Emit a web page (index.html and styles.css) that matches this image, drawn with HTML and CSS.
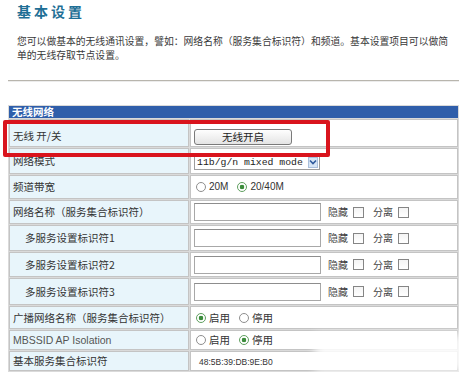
FILE: index.html
```html
<!DOCTYPE html>
<html lang="zh-CN">
<head>
<meta charset="utf-8">
<title>基本设置</title>
<link rel="stylesheet" href="styles.css">
</head>
<body>
<div class="page">
  <h1 class="title">基本设置</h1>
  <p class="desc">您可以做基本的无线通讯设置，譬如：网络名称（服务集合标识符）和频道。基本设置项目可以做简<br>单的无线存取节点设置。</p>
  <div class="rule"></div>
  <div class="table-wrap">
    <table class="settings">
      <colgroup><col class="c1"><col class="c2"></colgroup>
      <tr class="head"><td colspan="2">无线网络</td></tr>
      <tr class="r28 first">
        <td class="lab">无线 开/关</td>
        <td class="val"><button class="btn">无线开启</button></td>
      </tr>
      <tr class="r26">
        <td class="lab">网络模式</td>
        <td class="val">
          <div class="select"><span class="txt">11b/g/n mixed mode</span><span class="arrow"><svg width="8" height="6" viewBox="0 0 8 6"><path d="M1 1.5 L4 4.5 L7 1.5" fill="none" stroke="#2f5a9c" stroke-width="1.6"/></svg></span></div>
        </td>
      </tr>
      <tr class="r24">
        <td class="lab">频道带宽</td>
        <td class="val"><div class="line opts"><span class="radio"></span><span class="en">20M</span><span class="radio on gap"></span><span class="en">20/40M</span></div></td>
      </tr>
      <tr class="r24">
        <td class="lab">网络名称（服务集合标识符）</td>
        <td class="val"><div class="line"><span class="field"></span><span class="cap">隐藏</span><span class="check"></span><span class="cap cap2">分离</span><span class="check"></span></div></td>
      </tr>
      <tr class="r26">
        <td class="lab sub">多服务设置标识符1</td>
        <td class="val"><div class="line"><span class="field"></span><span class="cap">隐藏</span><span class="check"></span><span class="cap cap2">分离</span><span class="check"></span></div></td>
      </tr>
      <tr class="r25">
        <td class="lab sub">多服务设置标识符2</td>
        <td class="val"><div class="line"><span class="field"></span><span class="cap">隐藏</span><span class="check"></span><span class="cap cap2">分离</span><span class="check"></span></div></td>
      </tr>
      <tr class="r27">
        <td class="lab sub">多服务设置标识符3</td>
        <td class="val"><div class="line"><span class="field"></span><span class="cap">隐藏</span><span class="check"></span><span class="cap cap2">分离</span><span class="check"></span></div></td>
      </tr>
      <tr class="r23">
        <td class="lab">广播网络名称（服务集合标识符）</td>
        <td class="val"><div class="line opts"><span class="radio on"></span><span>启用</span><span class="radio gap"></span><span>停用</span></div></td>
      </tr>
      <tr class="r20">
        <td class="lab en light">MBSSID AP Isolation</td>
        <td class="val"><div class="line opts"><span class="radio"></span><span>启用</span><span class="radio on gap"></span><span>停用</span></div></td>
      </tr>
      <tr class="r20">
        <td class="lab">基本服务集合标识符</td>
        <td class="val"><span class="mac">48:5B:39:DB:9E:B0</span></td>
      </tr>
    </table>
    <div class="highlight"></div>
    <div class="smudge"></div>
  </div>
</div>
</body>
</html>
```

FILE: styles.css
```css
* { box-sizing: border-box; }
html, body { margin: 0; padding: 0; background: #fff; }
body {
  font-family: "Noto Sans CJK SC", "Liberation Sans", sans-serif;
  color: #333;
  overflow: hidden;
}
.page { padding: 1px 0 0 8px; width: 468px; }

.title {
  margin: 0 0 0 9px;
  font-size: 14px;
  line-height: 20px;
  font-weight: bold;
  letter-spacing: 3px;
  color: #1f6f96;
}
.desc {
  margin: 13px 0 0 9px;
  font-size: 9.8px;
  line-height: 14px;
  color: #3a3a3a;
  white-space: nowrap;
}
.rule {
  margin-top: 18px;
  width: 451px;
  height: 2px;
  border-top: 1px solid #b8b5ad;
  border-bottom: 1px solid #ececec;
}

.table-wrap { position: relative; margin-top: 23px; width: 451px; }
.settings {
  border-collapse: separate;
  border-spacing: 1px;
  width: 451px;
  table-layout: fixed;
  background: #dadada;
}
.c1 { width: 180px; }
.settings td {
  border: 1px solid #c4c4c4;
  padding: 0 0 0 3px;
  vertical-align: middle;
  font-size: 10.5px;
  line-height: 12px;
  white-space: nowrap;
}
.head td {
  height: 12px;
  background: #2f5eaa;
  border-color: #2f5eaa;
  color: #fff;
  font-weight: bold;
  line-height: 10px;
  padding-left: 2px;
}
.r28 td { height: 28px; }
.r27 td { height: 27px; }
.r26 td { height: 26px; }
.r25 td { height: 25px; }
.r24 td { height: 24px; }
.r23 td { height: 23px; }
.r20 td { height: 20px; }
.first td { padding-top: 6px; }

.lab { background: #e8f5fb; color: #333; }
.lab.sub { padding-left: 15px; }
.lab.light { color: #555; }
.val { background: #fff; color: #333; }
.en { font-family: "Liberation Sans", Arial, sans-serif; font-size: 10px; }

.btn {
  display: block;
  width: 98px;
  height: 16px;
  margin-top: 1px;
  padding: 0;
  border: 1px solid #7a7a7a;
  border-radius: 3px;
  background: linear-gradient(#fefefe, #e4e4e4);
  font: 10.5px/14px "Noto Sans CJK SC", sans-serif;
  color: #222;
}

.select {
  display: flex;
  align-items: center;
  width: 126px;
  height: 15px;
  margin-top: 2px;
  padding-left: 2px;
  border: 1px solid #9c9c9c;
  background: #fff;
  font: 9.8px/13px "Liberation Mono", "Courier New", monospace;
  color: #222;
}
.select .txt { flex: 1; }
.select .arrow {
  display: flex;
  align-items: center;
  justify-content: center;
  width: 10px;
  height: 11px;
  margin-right: 1px;
  background: #d7e5f5;
  border: 1px solid #a9bfdc;
}

.line { display: flex; align-items: center; }
.opts { margin-left: 2px; gap: 3px; }
.radio {
  width: 10px;
  height: 10px;
  border-radius: 50%;
  border: 1px solid #8e8e8e;
  background: #fff;
}
.radio.on {
  border-color: #5f9f5f;
  background: radial-gradient(circle, #3b8c3b 0 2px, #fff 2.6px);
}
.radio.gap { margin-left: 6px; }

.field {
  width: 127px;
  height: 18px;
  border: 1px solid #a8a8a8;
  border-top-color: #8d8d8d;
  background: #fff;
}
.cap { margin-left: 7px; font-size: 10px; color: #444; }
.cap2 { margin-left: 9px; }
.check {
  width: 11px;
  height: 11px;
  margin-left: 5px;
  border: 1px solid #858585;
  background: linear-gradient(#f4f4f4, #fff);
}

.mac {
  margin-left: 5px;
  font-family: "Liberation Sans", Arial, sans-serif;
  font-size: 8.5px;
  color: #333;
}

.highlight {
  position: absolute;
  left: -5px;
  top: 15px;
  width: 327px;
  height: 37px;
  border: 4px solid #d9141d;
  border-radius: 2px;
}
.smudge {
  position: absolute;
  left: 307px;
  top: 229px;
  width: 150px;
  height: 38px;
  background: rgba(255, 255, 255, 0.85);
  filter: blur(5px);
}
```
